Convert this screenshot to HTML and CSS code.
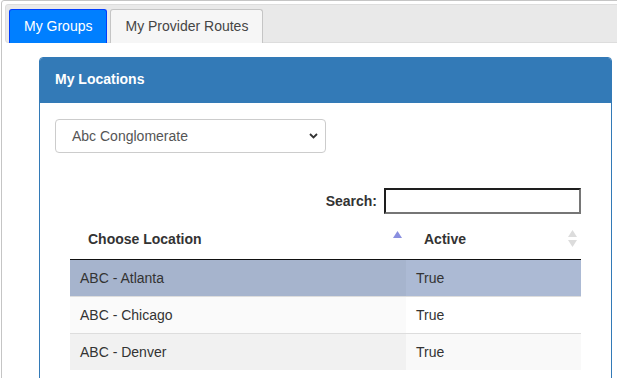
FILE: index.html
```html
<!DOCTYPE html>
<html lang="en">
<head>
<meta charset="utf-8">
<title>My Locations</title>
<link rel="stylesheet" href="styles.css">
</head>
<body>
<div class="tabs">
  <ul class="tabs-nav">
    <li class="tab tab-active"><a>My Groups</a></li>
    <li class="tab"><a>My Provider Routes</a></li>
  </ul>
  <div class="tabs-panel">
    <div class="card">
      <div class="card-head">My Locations</div>
      <div class="card-body">
        <div class="select">
          <span>Abc Conglomerate</span>
          <svg class="chev" width="9" height="6" viewBox="0 0 9 6"><polyline points="1,1 4.5,4.5 8,1" fill="none" stroke="#333" stroke-width="1.8"/></svg>
        </div>
        <div class="table-wrap">
          <div class="search"><label>Search:</label><input type="text" class="search-input"></div>
          <table class="grid">
            <thead>
              <tr>
                <th class="col-loc">Choose Location
                  <svg class="sort sort-asc" width="9" height="7" viewBox="0 0 9 7"><polygon points="0,7 4.5,0 9,7" fill="#8a8fe0"/></svg>
                </th>
                <th class="col-act">Active
                  <svg class="sort sort-both" width="9" height="17" viewBox="0 0 9 17"><polygon points="0,7 4.5,0 9,7" fill="#dcdcdc"/><polygon points="0,10 4.5,17 9,10" fill="#dcdcdc"/></svg>
                </th>
              </tr>
            </thead>
            <tbody>
              <tr class="sel"><td>ABC - Atlanta</td><td>True</td></tr>
              <tr class="even"><td>ABC - Chicago</td><td>True</td></tr>
              <tr class="odd"><td>ABC - Denver</td><td>True</td></tr>
            </tbody>
          </table>
        </div>
      </div>
    </div>
  </div>
</div>
</body>
</html>
```
FILE: styles.css
```css
html, body {
  margin: 0;
  padding: 0;
  overflow: hidden;
  background: #fff;
}
body {
  font-family: "Liberation Sans", Arial, sans-serif;
  font-size: 14px;
  color: #333;
}
.tabs {
  margin-left: 1px;
  width: 660px;
  height: 420px;
  border: 1px solid #c5c5c5;
  border-radius: 3px;
  padding: 3px;
}
.tabs-nav {
  list-style: none;
  margin: 0;
  padding: 4px 3px 0;
  height: 33px;
  background: #e9e9e9;
  border: 1px solid #dddddd;
  border-radius: 3px;
  display: flex;
  align-items: flex-start;
}
.tab {
  margin-right: 3px;
  height: 34px;
  box-sizing: border-box;
  border: 1px solid #c5c5c5;
  border-bottom: 0;
  border-radius: 3px 3px 0 0;
  background: #f6f6f6;
  color: #454545;
  padding: 0 14px;
  line-height: 32px;
  position: relative;
}
.tab-active {
  background: #007fff;
  border-color: #003eff;
  color: #fff;
}
.tabs-panel {
  padding: 14px 0 0 34px;
}
.card {
  width: 573px;
  box-sizing: border-box;
  border: 1px solid #337ab7;
  border-radius: 4px;
  height: 400px;
}
.card-head {
  background: #337ab7;
  color: #fff;
  font-weight: bold;
  line-height: 17px;
  padding: 13px 15px 15px;
  border-radius: 3px 3px 0 0;
}
.card-body {
  padding: 16px 15px 15px;
}
.select {
  width: 271px;
  height: 34px;
  box-sizing: border-box;
  border: 1px solid #cccccc;
  border-radius: 4px;
  display: flex;
  align-items: center;
  justify-content: space-between;
  padding: 0 7px 0 16px;
  color: #555;
}
.chev {
  display: block;
}
.table-wrap {
  padding: 0 15px;
}
.search {
  margin-top: 35px;
  display: flex;
  justify-content: flex-end;
  align-items: center;
}
.search label {
  font-weight: bold;
  line-height: 20px;
}
.search-input {
  margin: 0 0 0 7px;
  width: 197px;
  height: 26px;
  box-sizing: border-box;
  border: 2px solid #767676;
  border-top-color: #1e1e1e;
  border-left-color: #1e1e1e;
  padding: 0 4px;
  font: inherit;
}
.grid {
  margin-top: 5px;
  width: 100%;
  border-collapse: separate;
  border-spacing: 0;
}
.grid th {
  text-align: left;
  font-weight: bold;
  line-height: 20px;
  padding: 10px 18px;
  border-bottom: 1px solid #111;
  position: relative;
}
.col-loc {
  width: 336px;
  box-sizing: border-box;
}
.sort {
  position: absolute;
  display: block;
}
.sort-asc {
  right: 4px;
  top: 12px;
}
.sort-both {
  right: 4px;
  top: 11px;
}
.grid td {
  line-height: 20px;
  padding: 8px 10px;
  border-top: 1px solid #ddd;
}
.grid tbody tr:first-child td {
  border-top: 0;
}
.sel td:first-child { background: #a6b4cd; }
.sel td:last-child { background: #acbad4; }
.even td:first-child { background: #fafafa; }
.even td:last-child { background: #ffffff; }
.odd td:first-child { background: #f1f1f1; }
.odd td:last-child { background: #f9f9f9; }
```
